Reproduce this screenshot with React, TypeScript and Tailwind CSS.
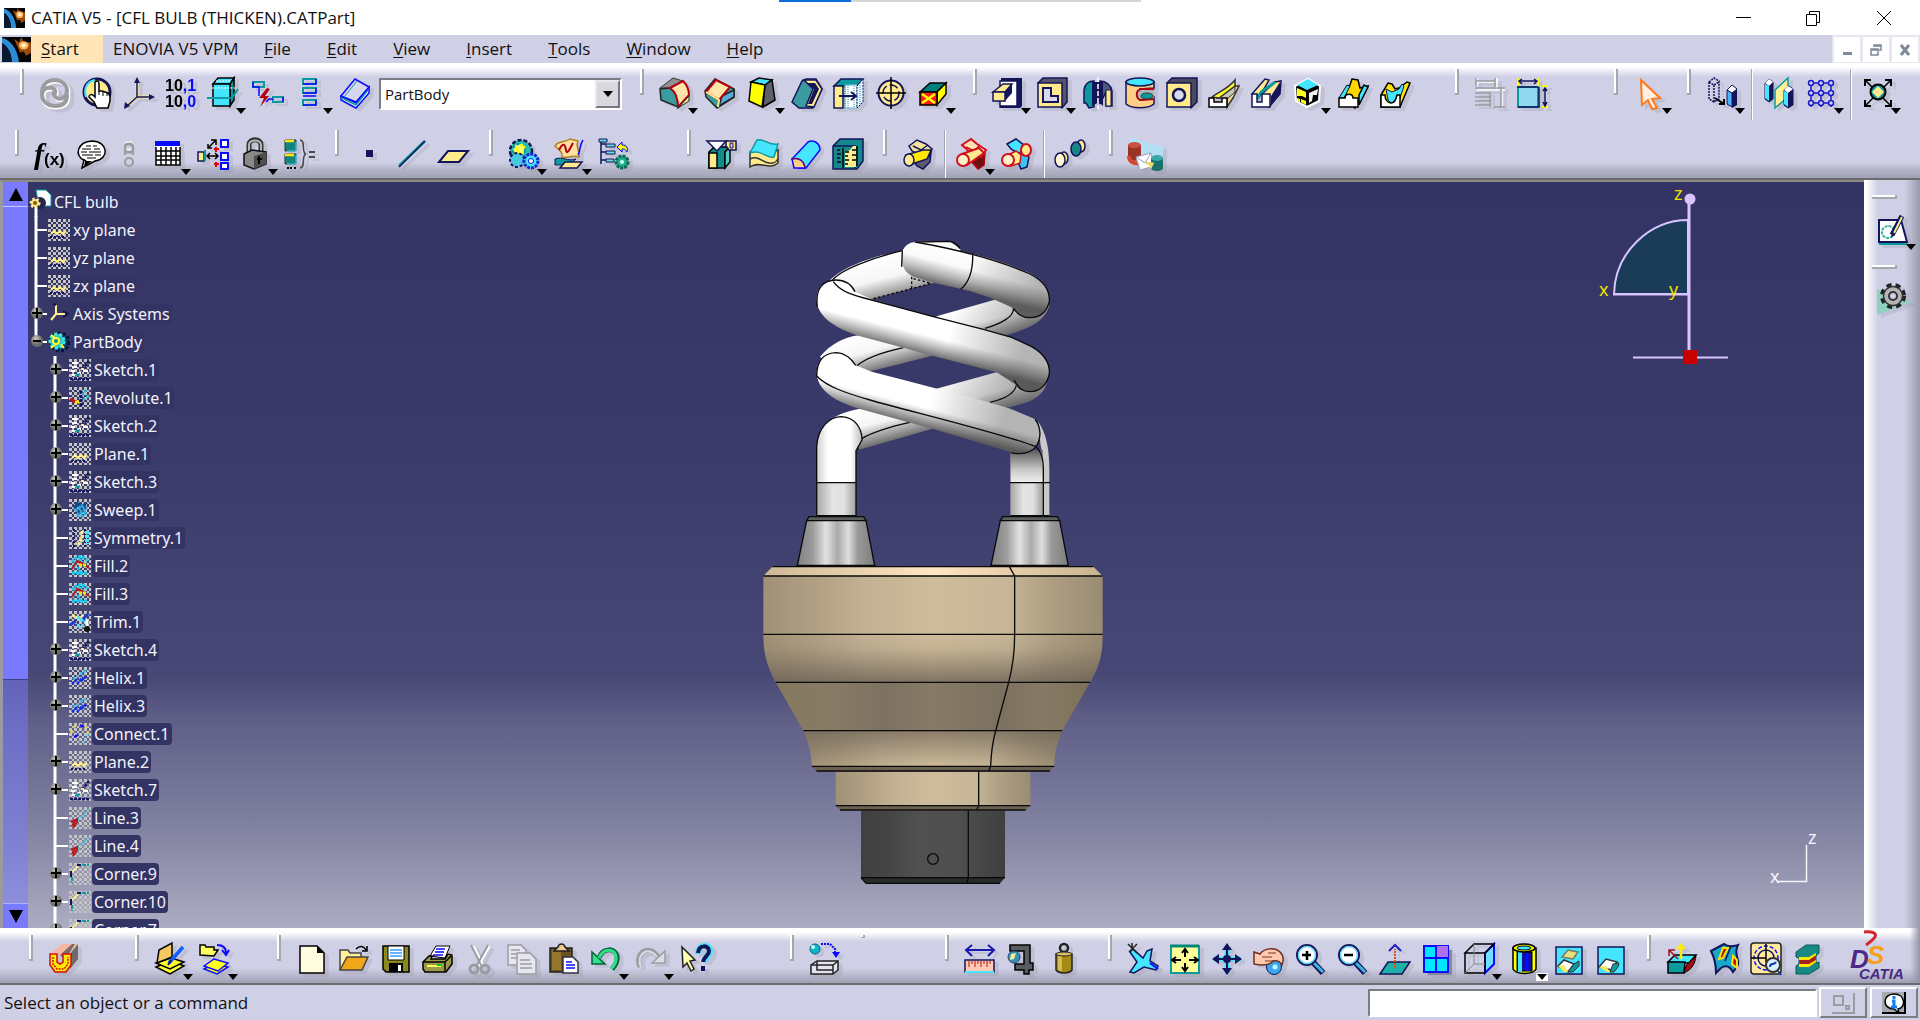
import type { ReactNode } from 'react';

const NAVY = '#14145a';
const TEAL = '#0b9a9e';
const CYAN = '#45e5ff';
const CREAM = '#ffeb8c';
const RED = '#b3000f';
const BLUE = '#0a0aff';
const GREY = '#9c9ca0';

// Every toolbar glyph is drawn on a 32 x 32 grid
const icons: Record<string, ReactNode> = {
  update: (
    <>
      <g fill="none" stroke="#fff" strokeWidth="5">
        <path d="M4 17C4 8 10 4 17 4s12 5 12 11-6 9-10 7-4-6-1-7" />
        <path d="M29 19c0 9-6 11-13 11S4 26 4 19s6-8 10-7 4 6 1 7" />
      </g>
      <g fill="none" stroke={GREY} strokeWidth="4">
        <path d="M3 16C3 7 9 3 16 3s12 5 12 11-6 9-10 7-4-6-1-7" />
        <path d="M28 18c0 9-6 11-12 11S3 25 3 18s6-8 10-7 4 6 1 7" />
      </g>
    </>
  ),
  hand: (
    <>
      <circle cx="16" cy="15" r="13" fill={CREAM} stroke={NAVY} strokeWidth="3" />
      <path d="M5 20C2 9 8 4 14 3" fill="none" stroke={CYAN} strokeWidth="2" />
      <path d="M14 5c2-2 4-1 4 2v7l3 0 3 1 3 1 2 3v5l-2 7H16l-3-6-5-5c0-3 3-3 5-1l1 1z" fill="#fff" stroke="#000" strokeWidth="1.5" />
      <path d="M18 14v4M22 15v4M26 16v3" stroke="#000" />
    </>
  ),
  axis: (
    <>
      <path d="M14 3v17h15M14 20L4 29" fill="none" stroke={CREAM} strokeWidth="3" />
      <path d="M14 3v17h15M14 20L4 29" fill="none" stroke={NAVY} strokeWidth="1.5" />
      <path d="M14 0l3 6h-6zM32 20l-6-3v6zM1 32l1-7 5 4z" fill={NAVY} />
    </>
  ),
  digits: (
    <g fontFamily="Liberation Sans, sans-serif" fontWeight="bold" fontSize="16">
      <text x="0" y="14">10<tspan fill={BLUE}>,1</tspan></text>
      <text x="0" y="30">10<tspan fill={BLUE}>,0</tspan></text>
    </g>
  ),
  block: (
    <>
      <path d="M6 7l5-6h16l-4 6z" fill={CYAN} stroke="#000" strokeWidth="1.5" />
      <path d="M23 7l4-6v22l-4 6z" fill={TEAL} stroke="#000" strokeWidth="1.5" />
      <path d="M6 7h17v22H6z" fill={CYAN} stroke="#000" strokeWidth="1.5" />
      <path d="M0 21h25l6-9" fill="none" stroke={TEAL} strokeWidth="2" />
      <path d="M5 11h24M9 4h15" stroke="#fff" strokeDasharray="2 1" />
    </>
  ),
  bolt: (
    <>
      <path d="M1 5h11v5H1zM21 20h10v5H21z" fill="none" stroke={TEAL} strokeWidth="2" />
      <path d="M1 5v5h6v9M21 22h-4l-3 3M31 20v5" fill="none" stroke={BLUE} strokeWidth="1.5" />
      <path d="M15 11L7 21h5l-4 9 9-11h-4l5-7z" fill={RED} />
    </>
  ),
  stack: (
    <>
      <path d="M9 2h13v5H9zM9 11h13v5H9zM9 23h13v5H9z" fill="none" stroke={TEAL} strokeWidth="2" />
      <path d="M9 7h13V2M9 19h13M9 16h13v-5M9 28h13v-5" fill="none" stroke={BLUE} strokeWidth="1.5" />
    </>
  ),
  book: (
    <>
      <path d="M2 19v4l15 8 13-15v-6L17 26z" fill="#fff" stroke={BLUE} strokeWidth="1.5" />
      <path d="M3 21l14 7 12-15" fill="none" stroke={TEAL} strokeWidth="1.5" />
      <path d="M2 19L16 2l14 8-13 15z" fill="#d6d6ee" stroke={BLUE} strokeWidth="1.5" />
      <path d="M5 20L18 4" stroke={TEAL} />
    </>
  ),
  fillet: (
    <>
      <path d="M1 11L14 1l10 3-12 7z" fill="#8f8f8f" stroke="#333" />
      <path d="M1 12l10-1c5 3 8 10 8 19L2 23z" fill="#3a9ba0" stroke="#222" strokeWidth="1.5" />
      <path d="M11 11L24 4c5 5 6 9 6 14l-11 12c0-8-2-15-8-19z" fill="#ffe6a8" stroke={RED} strokeWidth="2" />
      <path d="M19 31l11-12v5z" fill={CREAM} stroke="#222" />
    </>
  ),
  chamfer: (
    <>
      <path d="M1 14l10-12 19 10v8L13 31 2 20z" fill="#3a9ba0" stroke="#222" strokeWidth="1.5" />
      <path d="M15 29l3-10 12-6v7z" fill="#5aa9d8" stroke="#222" strokeWidth="1.5" />
      <path d="M2 15L12 3l14 7-11 13z" fill="#ffe6a8" stroke={RED} strokeWidth="2" />
      <path d="M2 15l13 8-1 7" fill="none" stroke={CREAM} strokeWidth="2" />
    </>
  ),
  draft: (
    <>
      <path d="M5 5l8-4 13 2-7 5z" fill={CYAN} stroke="#000" strokeWidth="1.5" />
      <path d="M19 8l7-5 3 20-12 7z" fill="#5f6068" stroke="#000" strokeWidth="1.5" />
      <path d="M5 5l14 3-3 22-13-6z" fill="#ffff00" stroke="#000" strokeWidth="1.5" />
    </>
  ),
  shell: (
    <>
      <path d="M1 25L11 4l4-2h10l6 10-9 19H8z" fill="#3a9ba0" stroke={NAVY} strokeWidth="1.5" />
      <path d="M13 3h12l6 9-8 18-8-1 7-17z" fill={CREAM} stroke={NAVY} strokeWidth="1.5" />
      <path d="M16 6h8l4 6-7 15h-4l6-15z" fill={NAVY} />
    </>
  ),
  thickness: (
    <>
      <path d="M1 9l7-7h22l-6 7z" fill={TEAL} stroke={NAVY} strokeWidth="1.5" />
      <path d="M1 9h9v22H1z" fill={CREAM} stroke={NAVY} strokeWidth="1.5" />
      <path d="M12 8h12v23H12z" fill="#fff" stroke="#7bd" />
      <path d="M24 9l6-7v23l-6 6z" fill="#e8f6ff" stroke={NAVY} strokeDasharray="2 1" />
      <path d="M12 8v23M15 8v23M27 6v22M21 9v22" stroke={TEAL} strokeDasharray="1 1" />
      <path d="M6 19h16M18 15l5 4-5 4" fill="none" stroke={NAVY} strokeWidth="2" />
    </>
  ),
  target: (
    <>
      <circle cx="16" cy="16" r="12.5" fill={CREAM} stroke={NAVY} strokeWidth="2" />
      <circle cx="16" cy="16" r="8" fill="none" stroke={NAVY} strokeWidth="1.5" strokeDasharray="9 3" />
      <path d="M16 0v32M1 16h30" stroke="#000" strokeWidth="1.5" />
    </>
  ),
  removeFace: (
    <>
      <path d="M3 15L13 6h16l-9 9z" fill="#00807c" stroke="#000" strokeWidth="1.5" />
      <path d="M20 15l9-9v11l-9 11z" fill="#ffff00" stroke="#000" strokeWidth="1.5" />
      <path d="M3 15h17v13H3z" fill="#ff1a1a" stroke="#000" strokeWidth="1.5" />
      <path d="M5 17l13 9M18 17L5 26" stroke="#ffff00" strokeWidth="2.5" />
    </>
  ),
  pad: (
    <>
      <path d="M9 1h21v28l-2 2H7l2-3z" fill={NAVY} />
      <path d="M8 4h17v25H8z" fill="#fff" stroke={NAVY} strokeWidth="1.5" />
      <path d="M1 15l10-8h9l-7 8z" fill={CREAM} stroke={NAVY} strokeWidth="1.5" />
      <path d="M13 15l7-8v9l-7 8z" fill={NAVY} />
      <path d="M1 15h12v9H1z" fill={CREAM} stroke={NAVY} strokeWidth="1.5" />
    </>
  ),
  pocket: (
    <>
      <path d="M1 6l5-5h24v24l-5 6z" fill="#55556a" stroke={NAVY} strokeWidth="1.5" />
      <path d="M1 6h24v24H1z" fill={CREAM} stroke={NAVY} strokeWidth="1.5" />
      <path d="M6 11h8v8h7v6H6z" fill="#d8d8ee" stroke={NAVY} strokeWidth="2" />
    </>
  ),
  shaft: (
    <>
      <path d="M2 13C3 6 8 4 12 4v26l-5 1-3-5-2 0z" fill={TEAL} stroke={NAVY} strokeWidth="1.5" />
      <path d="M18 4c6 0 11 4 12 10v15h-6V15l-6 12z" fill="#4a5a78" stroke={NAVY} strokeWidth="1.5" />
      <path d="M10 5h11v24l-4-4-7 4z" fill={NAVY} />
      <path d="M24 13h5v16h-5z" fill={CREAM} stroke={NAVY} />
      <path d="M16 0v32" stroke="#fff" strokeWidth="1.5" strokeDasharray="5 2" />
    </>
  ),
  groove: (
    <>
      <path d="M2 5v22c6 5 22 5 28 0v-7l-14 3V12l14-1V5z" fill="#ffcf86" stroke={NAVY} strokeWidth="1.5" />
      <path d="M30 12H18c-7 0-7 11 0 11l12-1" fill="#a8b8b8" stroke={RED} strokeWidth="2" />
      <ellipse cx="23" cy="19" rx="6" ry="3" fill={TEAL} stroke="#333" />
      <ellipse cx="16" cy="5" rx="14" ry="4" fill={CYAN} stroke={NAVY} strokeWidth="1.5" />
    </>
  ),
  hole: (
    <>
      <path d="M1 6l5-5h25v24l-6 6z" fill="#4a4a5c" stroke={NAVY} strokeWidth="1.5" />
      <path d="M1 6h24v24H1z" fill={CREAM} stroke={NAVY} strokeWidth="1.5" />
      <circle cx="13" cy="18" r="6" fill="#d8d8ee" stroke={NAVY} strokeWidth="2.5" />
    </>
  ),
  rib: (
    <>
      <path d="M19 21L26 9l5 0-6 12-6 9z" fill="#f4d99a" stroke="#333" strokeWidth="1.5" />
      <path d="M8 21L27 7l0 8-8 7z" fill="#c8c8b8" stroke="#333" />
      <path d="M4 20C10 15 20 12 27 3l0 6-16 12z" fill="#ffff30" stroke="#333" strokeWidth="1.5" />
      <path d="M1 21h5v4h8v-4h5v9H1z" fill="#fff" stroke="#000" strokeWidth="1.5" />
    </>
  ),
  slot: (
    <>
      <path d="M2 17L15 2l4 1-9 16z" fill={CREAM} stroke={NAVY} strokeWidth="1.5" />
      <path d="M12 17L25 5l6-1-1 13-11 13z" fill={CREAM} stroke={NAVY} strokeWidth="1.5" />
      <path d="M8 22C9 13 18 12 25 5" fill="none" stroke={TEAL} strokeWidth="3" />
      <path d="M20 30l10-13V5l-9 14z" fill={NAVY} />
      <path d="M2 17h5v8h5v-8h8v13H2z" fill="#fff" stroke={NAVY} strokeWidth="1.5" />
    </>
  ),
  stiffener: (
    <>
      <path d="M3 9l13-7 12 7-1 15-12 6-11-6z" fill="#000" stroke="#fff" strokeWidth="2" />
      <path d="M5 8l11-6 10 6-11 5z" fill={CYAN} />
      <path d="M5 11l9 4v6l-4-2-5 0zM5 21l3 1 0 3-3-1z" fill="#ffff20" />
      <path d="M17 16l9-4-1 6-4 0-1 6-3 2z" fill="#f0f0f0" />
      <path d="M9 22l5 2v4l-5-3z" fill="#ffff20" />
    </>
  ),
  solidCombine: (
    <>
      <path d="M5 20L13 8l2-6 6 1 2 8 8-2-8 14-5 8z" fill="#ffd700" stroke="#000" strokeWidth="1.5" />
      <path d="M22 18l5-10 4 2-9 18z" fill={CYAN} stroke="#000" strokeWidth="1.5" />
      <path d="M2 21l8-13 3 1-6 12z" fill={CYAN} stroke="#000" />
      <path d="M2 21h6c0-5 8-5 8 0h5v9H2z" fill="#fff" stroke="#000" strokeWidth="1.5" />
    </>
  ),
  removedLoft: (
    <>
      <path d="M2 18L9 6l4 1 3 5 4-1 8-6 3 1-10 24H2z" fill="#ffe600" stroke="#000" strokeWidth="1.5" />
      <path d="M7 12l6 3 7-3 3-5 2 2-5 15-6 4-5-5z" fill={CYAN} stroke={NAVY} />
      <path d="M2 18h4c0 5 3 8 6 8s5-3 6-8h3v12H2z" fill="#fff" stroke="#000" strokeWidth="1.5" />
    </>
  ),
  dimsOff: (
    <>
      <g stroke="#fff" strokeWidth="1.5" fill="none" transform="translate(1 1)">
        <path d="M2 4h20M2 12h28M27 12v18M2 0v8M22 0v12" />
      </g>
      <path d="M2 4h19M2 1v8M21 1v9M1 11h30M1 16h16M1 20h16M1 24h16M1 28h16M16 16v14M27 10v21M20 30h11" stroke={GREY} strokeWidth="1.5" fill="none" />
    </>
  ),
  dims: (
    <>
      <path d="M2 1v8M22 1v8" stroke="#ffff00" strokeWidth="2" />
      <path d="M26 9h6M26 30h6" stroke="#ffff00" strokeWidth="2" />
      <path d="M3 4h18M6 2L3 4l3 3M18 2l3 2-3 3M29 11v17M27 14l2-3 2 3M27 25l2 4 2-4" fill="none" stroke={NAVY} strokeWidth="1.5" />
      <path d="M2 10h20v20H2z" fill="#8fd8ef" stroke={TEAL} strokeWidth="2" />
      <path d="M1 10h21M2 30h21V10" fill="none" stroke={NAVY} strokeWidth="1.5" />
    </>
  ),
  cursor: (
    <path d="M8 3l19 18-8 1 5 9-5 1-4-9-6 5z" fill="#fff0e0" stroke="#ff7a1a" strokeWidth="2" />
  ),
  transform: (
    <>
      <path d="M3 5l5-4 5 3v18l-5 3-5-3zM3 5l5 3 5-3M8 8v17" fill="none" stroke={NAVY} strokeWidth="1.5" strokeDasharray="2 1" />
      <path d="M9 21l9 6M18 22v5h-5" fill="none" stroke="#000" strokeWidth="2" />
      <path d="M21 13l5 3v14l-5-3z" fill="#4ab6ff" stroke={NAVY} />
      <path d="M26 16l5-4v16l-5 3z" fill={NAVY} />
      <path d="M21 13l5-5 5 4-5 4z" fill="#fff" stroke={NAVY} />
    </>
  ),
  mirror: (
    <>
      <path d="M2 6l4-4 4 3v17l-4 3-4-3z" fill={NAVY} stroke={NAVY} />
      <path d="M2 7l4 2v15l-4-3z" fill={CYAN} />
      <path d="M2 6l4-4 4 3-4 4z" fill="#fff" />
      <path d="M12 13L25 1v19L12 31z" fill="#fdf394" stroke={TEAL} strokeWidth="1.5" />
      <path d="M21 13l5-4 4 3v16l-5 3-4-3z" fill={NAVY} stroke={NAVY} />
      <path d="M21 14l4 2v14l-4-3z" fill={CYAN} />
      <path d="M21 13l4-4 5 3-5 4z" fill="#fff" />
    </>
  ),
  pattern: (
    <g fill="#cfcfe6" stroke="#1a1acc" strokeWidth="1.5">
      <path d="M6 3v27M16 3v27M26 3v27M3 6h26M3 16h26M3 26h26" />
      {[6, 16, 26].map((x) =>
        [6, 16, 26].map((y) => <circle key={`${x}-${y}`} cx={x} cy={y} r="2.5" />)
      )}
    </g>
  ),
  scaling: (
    <>
      <path d="M4 4l24 24M28 4L4 28" stroke="#000" strokeWidth="1.5" />
      <path d="M3 9V3h6M23 3h6v6M3 23v6h6M23 29h6v-6" fill="none" stroke="#000" strokeWidth="2" />
      <circle cx="16" cy="15" r="7.5" fill={TEAL} stroke="#000" strokeWidth="2" />
      <path d="M16 9l6 6-6 6-6-6z" fill={CREAM} />
    </>
  ),
  formula: (
    <>
      <text x="0" y="26" fontFamily="Liberation Serif, serif" fontStyle="italic" fontWeight="bold" fontSize="30">f</text>
      <text x="10" y="27" fontFamily="Liberation Sans, sans-serif" fontWeight="bold" fontSize="17">(x)</text>
    </>
  ),
  comment: (
    <>
      <path d="M8 22C-2 18 1 4 16 3c16 0 18 18 3 20L6 30z" fill="#fff" stroke="#000" strokeWidth="1.5" />
      <path d="M6 22l3 1-1 6 8-6h-5l-3-2z" fill="#000" />
      <path d="M10 8h5m2 0h4M6 11h9m3 0h6M5 14h6m2 0h12M6 17h11m2 0h6M11 20h9" stroke="#000" strokeWidth="1.2" />
    </>
  ),
  link: (
    <>
      <path d="M10 17V9c0-5 8-5 8 0v8M10 13h8" fill="none" stroke="#fff" strokeWidth="4" />
      <path d="M10 17V9c0-4 8-4 8 0v8M10 14h8" fill="none" stroke={GREY} strokeWidth="3" />
      <circle cx="14" cy="24" r="4" fill="#cfcfe6" stroke={GREY} strokeWidth="2" />
    </>
  ),
  table: (
    <>
      <path d="M4 4h24v23H4z" fill="#fff" />
      <path d="M4 9v18h24V9M9 9v18M14 9v18M19 9v18M24 9v18M4 13h24M4 18h24M4 22h24" fill="none" stroke="#000" strokeWidth="1.5" />
      <path d="M3 3h25v5H3z" fill={BLUE} />
    </>
  ),
  relations: (
    <>
      <path d="M1 14h6v9H1z" fill={CREAM} stroke={NAVY} strokeWidth="1.5" />
      <path d="M8 12v11" stroke={TEAL} strokeWidth="2" />
      <path d="M11 10l8-8M14 2h5v5M11 6v4h4M10 18h11M13 15l-3 3 3 3M18 15l3 3-3 3" fill="none" stroke="#000" strokeWidth="1.5" />
      <path d="M19 9v5M17 11h5M19 24v5M17 26h5" stroke="#e00000" strokeWidth="2" />
      <path d="M24 2h7v7h-7zM24 15h7v7h-7zM24 25h7v6h-7z" fill="#fff" stroke={BLUE} strokeWidth="2" />
    </>
  ),
  lock: (
    <>
      <path d="M10 15V7c0-7 12-7 12 0v9" fill="none" stroke="#333" strokeWidth="5" />
      <path d="M10 15V7c0-6 12-6 12 0v9" fill="none" stroke="#b8b8b8" strokeWidth="2" />
      <path d="M5 16l8-4 14 2v12l-12 5L5 27z" fill="#8a8a8a" stroke="#111" strokeWidth="1.5" />
      <path d="M15 18l12-4v12l-12 5z" fill="#4e4e4e" />
      <path d="M20 18v8M18 21h5" stroke="#000" strokeWidth="2" />
    </>
  ),
  equivalent: (
    <>
      <path d="M1 2h11v11H1zM1 16h11v10H1z" fill="#12857f" stroke="#333" />
      <path d="M1 3h9M1 17h9" stroke="#ffe600" strokeWidth="2.5" />
      <path d="M12 4v9H3M12 17v9H3" fill="none" stroke={CYAN} />
      <path d="M3 30h2M6 30h2M10 30h2" stroke="#000" strokeWidth="2" />
      <path d="M16 2c6 0 1 13 6 14-5 1 0 14-6 14" fill="none" stroke="#444" strokeWidth="1.5" />
      <path d="M25 14h6M25 19h6" stroke="#222" strokeWidth="1.5" />
    </>
  ),
  point: <path d="M12 12h7v7h-7z" fill={NAVY} />,
  line: (
    <>
      <path d="M3 28L29 3" stroke={TEAL} strokeWidth="3" />
      <path d="M3 29L29 3" stroke={NAVY} strokeWidth="1.5" />
    </>
  ),
  plane: <path d="M1 24l9-11h20l-9 11z" fill={CREAM} stroke={NAVY} strokeWidth="2" />,
  gears: (
    <>
      <circle cx="13" cy="13" r="11" fill="#29bfb0" stroke={NAVY} strokeWidth="2.5" strokeDasharray="4 2" />
      <circle cx="11" cy="12" r="6" fill="#ffff60" stroke={TEAL} strokeWidth="2" strokeDasharray="3 2" />
      <circle cx="9" cy="22" r="7" fill="#46c8e0" stroke={NAVY} strokeWidth="2" strokeDasharray="3 2" />
      <circle cx="23" cy="23" r="7" fill={CYAN} stroke="#1428c8" strokeWidth="3" strokeDasharray="3 1" />
      <circle cx="23" cy="23" r="2.5" fill="#fff" stroke={BLUE} />
      <path d="M13 6l4 4M8 9l3 6" stroke="#ffff00" strokeWidth="2" />
    </>
  ),
  shapeSet: (
    <>
      <path d="M2 8C6 2 12 5 17 1l8 2c-3 6 2 9 1 16-7-3-10 2-17 0 1-5-3-7-7-11z" fill="#ffe0a0" stroke="#b08020" strokeWidth="1.5" />
      <path d="M6 12c4-8 6-6 7 0s4-2 7-7" fill="none" stroke={RED} strokeWidth="2" />
      <path d="M2 21c8-3 12 3 21 0l-8 8c-4-3-8-2-13-2z" fill={TEAL} stroke={NAVY} />
      <path d="M7 30l5-6h17l-5 6z" fill={CREAM} stroke={NAVY} strokeWidth="1.5" />
      <path d="M30 2c-4 6-2 9-5 15" fill="none" stroke={BLUE} strokeWidth="1.5" />
    </>
  ),
  publish: (
    <>
      <path d="M3 2v24M3 6h5M3 14h5M3 22h5" stroke={NAVY} strokeWidth="1.5" />
      <path d="M1 1h8v3H1zM8 6h9v3H8zM8 13h9v3H8zM8 21h8v3H8z" fill="#6dd" stroke={NAVY} />
      <path d="M19 9l5-5v3c5 0 6 3 5 7-2-3-3-3-5-3v3z" fill="#ffff00" stroke={BLUE} />
      <circle cx="24" cy="24" r="6" fill="#21b08c" stroke="#0a6a50" strokeWidth="3" strokeDasharray="3 1" />
      <circle cx="24" cy="24" r="2" fill="#cfe" />
    </>
  ),
  split: (
    <>
      <path d="M3 14l5-5h15l-4 5v16H3z" fill="#0f8d8b" stroke="#000" strokeWidth="1.5" />
      <path d="M19 14l5-5v15l-5 6z" fill="#5cc" stroke="#000" strokeWidth="1.5" />
      <path d="M3 15h8v15H3z" fill={CREAM} stroke="#000" strokeWidth="1.5" />
      <path d="M1 3h19l-9 10z" fill="#fff" stroke={NAVY} strokeWidth="1.5" />
      <path d="M20 3h10v9h-7l-3-4z" fill={CREAM} stroke={NAVY} strokeWidth="1.5" />
      <path d="M24 5h3v5h-3z" fill="#cfcfe6" stroke={NAVY} />
    </>
  ),
  thickSurface: (
    <>
      <path d="M2 14c8-5 16 5 28-2v13c-9 8-18-3-28 4z" fill={CREAM} stroke="#333" strokeWidth="1.5" />
      <path d="M2 15L9 2c7-2 12 6 21 4l-4 13c-8 2-12-8-24-4z" fill={CYAN} stroke={TEAL} strokeWidth="1.5" />
      <path d="M2 21c8-4 12 3 19 4s7-2 9-4" fill="none" stroke="#333" strokeWidth="1.5" />
    </>
  ),
  closeSurface: (
    <>
      <path d="M2 21L18 4c5-3 12 1 12 8L16 30H9z" fill={CYAN} stroke={BLUE} strokeWidth="1.5" />
      <path d="M2 21c7-2 12 2 13 9H4z" fill="#ffd080" stroke={BLUE} strokeWidth="1.5" />
      <path d="M2 21c7-2 12 2 13 8" fill="none" stroke={RED} />
    </>
  ),
  sew: (
    <>
      <path d="M1 8l7-7h23v22l-6 8H1z" fill="#13898c" stroke={NAVY} strokeWidth="1.5" />
      <path d="M1 8h22v22" fill="none" stroke={NAVY} strokeWidth="1.5" />
      <path d="M13 14l5-2 3-4h3v21H13z" fill={CREAM} />
      <path d="M25 8v20M5 12h3M5 16h4M5 20h3M5 24h4M11 10v20M13 14h4M13 18h3M13 22h4M13 26h3M20 12h4M20 17h4M20 22h4" stroke="#000" strokeWidth="1.5" />
    </>
  ),
  assemble: (
    <>
      <path d="M12 24l8-9 9-1-1 10-7 7-6-3z" fill="#5a5a70" stroke={NAVY} strokeWidth="1.5" />
      <path d="M7 8l8-6 9 4 6 5-3 8-9-2-8-4z" fill="#f2e2a0" stroke={NAVY} strokeWidth="1.5" />
      <path d="M11 8l8 4 7-5" fill="none" stroke={NAVY} strokeWidth="1.5" />
      <path d="M4 17l17-5 8 0-4 9-15 5z" fill="#ffe800" stroke={NAVY} strokeWidth="1.5" />
      <ellipse cx="7" cy="22" rx="5" ry="6" fill={CREAM} stroke={NAVY} strokeWidth="1.5" />
    </>
  ),
  boolAdd: (
    <>
      <path d="M14 22l8-10 7 3-1 12-6 4z" fill="#701010" stroke={RED} strokeWidth="1.5" />
      <path d="M6 7l9-6 6 5 9 6-5 7-10-4z" fill="#ffe2b0" stroke="#d01020" strokeWidth="2" />
      <path d="M10 9l8 4 6-6" fill="none" stroke="#d01020" strokeWidth="1.5" />
      <path d="M6 16l17-6 5 5-17 12z" fill={CREAM} stroke="#d01020" strokeWidth="2" />
      <circle cx="7" cy="22" r="6" fill="#fff0c8" stroke="#d01020" strokeWidth="2" />
    </>
  ),
  boolTrim: (
    <>
      <path d="M6 6l9-5 9 7-6 8-8-5z" fill={CYAN} stroke={NAVY} strokeWidth="1.5" />
      <path d="M15 19l8-4 5 4-2 10-6 2z" fill="#3ac4f0" stroke={NAVY} strokeWidth="1.5" />
      <path d="M7 17l8-4 5 4-1 8-9 3z" fill={CREAM} stroke="#d01020" strokeWidth="1.5" />
      <circle cx="7" cy="22" r="6" fill="#fff0c8" stroke="#d01020" strokeWidth="2" />
      <ellipse cx="25" cy="12" rx="5" ry="6" fill={CREAM} stroke="#d01020" strokeWidth="2" />
    </>
  ),
  lump: (
    <>
      <ellipse cx="26" cy="8" rx="4" ry="6" fill={CREAM} stroke={NAVY} strokeWidth="1.5" />
      <ellipse cx="21" cy="11" rx="5" ry="7" fill="#15878a" stroke={NAVY} strokeWidth="1.5" />
      <ellipse cx="9" cy="20" rx="4" ry="6" fill={CREAM} stroke={NAVY} strokeWidth="1.5" />
      <ellipse cx="5" cy="22" rx="5" ry="7" fill="#fff6d0" stroke={NAVY} strokeWidth="1.5" />
    </>
  ),
  catalog: (
    <>
      <path d="M1 0c11 0 17 7 34 8v12H9L1 14z" fill="#b4e0f6" />
      <path d="M0 7v12c0 5 13 5 13 0V7z" fill="#9c3328" />
      <ellipse cx="6.5" cy="7" rx="6.5" ry="3" fill="#c8523f" />
      <path d="M1 18c0 7 6 8 13 7" fill="none" stroke="#d8442c" strokeWidth="4" />
      <path d="M8 19l15-4 3 13-14 4z" fill="#fff" stroke="#9aa0c0" />
      <path d="M8 19l9 6 6-10" fill="none" stroke="#9aa0c0" />
      <path d="M23 20h12v10c0 4-12 4-12 0z" fill="#18706f" />
      <ellipse cx="29" cy="20" rx="6" ry="3" fill="#3aa8a4" />
      <path d="M18 25l6 1-2 4" fill="none" stroke="#e8dc70" strokeWidth="3" />
    </>
  ),
  sectionMaterial: (
    <>
      <path d="M2 11L14 1h16L19 12z" fill="#f6b8a4" />
      <path d="M12 12L24 1l3 0-10 16z" fill="#7c6a66" />
      <path d="M22 11l8-10v15l-8 10z" fill="#6d6a68" />
      <path d="M2 11h7v8l3 2 3-2v-8h8v11l-5 7H7l-5-7z" fill="#ffe800" stroke="#d01010" strokeWidth="1.5" />
      <path d="M5 14v7l4 5h7l4-5v-7" fill="none" stroke="#d01010" strokeWidth="1.5" strokeDasharray="2 1" />
    </>
  ),
  catalogOpen: (
    <>
      <path d="M2 24l15-6 13 5-14 8z" fill="#ffff30" stroke="#000" strokeWidth="1.5" />
      <path d="M2 20l15-5 13 4-14 7z" fill="#ffff30" stroke="#000" strokeWidth="1.5" />
      <path d="M3 20L5 7l13-7v14z" fill="#f5c860" stroke="#000" strokeWidth="1.5" />
      <path d="M29 4L15 20" stroke="#1060ff" strokeWidth="3.5" />
      <path d="M17 17l-3 5" stroke={NAVY} strokeWidth="2" />
    </>
  ),
  catalogLoad: (
    <>
      <path d="M1 12V2h5l1 2h8v3h4l-4 6z" fill="#ffff60" stroke="#000" strokeWidth="1.5" />
      <path d="M18 2c7 0 9 3 9 8M23 7l4 5 3-5" fill="none" stroke={BLUE} strokeWidth="2" />
      <path d="M5 26l10-5 14 3-11 7z" fill="#ffff20" stroke={BLUE} strokeWidth="1.5" />
      <path d="M5 23l10-7 14 4-10 8z" fill="#ffff20" stroke={BLUE} strokeWidth="1.5" />
    </>
  ),
  newFile: (
    <>
      <path d="M4 3h17l7 7v20H4z" fill="#fffce0" stroke="#000" strokeWidth="1.5" />
      <path d="M21 3v7h7z" fill="#000" />
    </>
  ),
  openFile: (
    <>
      <path d="M2 27V7h8l2 3h11v5" fill="#fff0a0" stroke="#444" strokeWidth="1.5" />
      <path d="M2 27l7-13h21l-6 13z" fill="#f0a818" stroke="#444" strokeWidth="1.5" />
      <path d="M18 6c4-4 8-3 10 1M29 3v5h-5" fill="none" stroke="#000" strokeWidth="1.5" />
    </>
  ),
  save: (
    <>
      <path d="M3 3h26v26H6l-3-3z" fill="#8c8820" stroke="#000" strokeWidth="1.5" />
      <path d="M8 3h16v14H8z" fill="#fff" stroke="#000" />
      <path d="M10 7h12M10 10h12M10 13h12" stroke="#39f" strokeWidth="1.5" />
      <path d="M9 20h14v9H9z" fill="#000" />
      <path d="M18 22h3v6h-3z" fill="#fff" />
    </>
  ),
  print: (
    <>
      <path d="M8 13L14 3h14l-5 12z" fill="#fff" stroke="#000" />
      <path d="M14 6h9M13 9h9M11 12h10" stroke={BLUE} strokeWidth="1.5" />
      <path d="M1 19l6-6h3l-1 3h14l3-5 4 1v9l-6 8H3l-2-3z" fill="#9c9a4a" stroke="#000" strokeWidth="1.5" />
      <path d="M1 19h22l6-6M23 19v9" fill="none" stroke="#000" strokeWidth="1.5" />
      <path d="M5 23h14" stroke="#ffff60" strokeWidth="2" />
      <path d="M15 22h4" stroke="#0c0" strokeWidth="2" />
    </>
  ),
  cut: (
    <>
      <g fill="none" stroke="#fff" strokeWidth="3" transform="translate(1 1)">
        <path d="M8 2l10 20M24 2L13 22" />
      </g>
      <path d="M7 2l10 20M24 2L13 22" stroke={GREY} strokeWidth="2" />
      <circle cx="10" cy="26" r="4" fill="none" stroke={GREY} strokeWidth="3" />
      <circle cx="21" cy="26" r="4" fill="none" stroke={GREY} strokeWidth="3" />
    </>
  ),
  copy: (
    <g fill="#e6e6f0" stroke={GREY} strokeWidth="1.5">
      <path d="M2 2h13l5 5v15H2z" />
      <path d="M5 7h9M5 11h9M5 15h6" />
      <path d="M11 10h13l6 6v15H11z" />
      <path d="M14 17h10M14 21h12M14 25h12" />
    </g>
  ),
  paste: (
    <>
      <path d="M2 5h22v24H2z" fill="#6b5320" stroke="#222" strokeWidth="1.5" />
      <path d="M4 7h9v20H4z" fill="#94762e" />
      <path d="M6 8l4-4c1-4 6-4 7 0l4 4z" fill="#f0c890" stroke="#222" strokeWidth="1.5" />
      <path d="M15 14h10l5 5v11H15z" fill="#fff" stroke="#334" strokeWidth="1.5" />
      <path d="M18 19h6M18 22h9M18 25h9" stroke={BLUE} strokeWidth="1.5" />
    </>
  ),
  undo: (
    <>
      <path d="M9 15c4-11 16-10 18-2 1 5-1 9-5 13" fill="none" stroke="#08603a" strokeWidth="5" />
      <path d="M2 9v12h13z" fill="#2fe08a" stroke="#08603a" strokeWidth="1.5" />
      <path d="M9 15c4-10 15-10 17-2 1 5-1 9-5 13" fill="none" stroke="#2fe08a" strokeWidth="3" />
    </>
  ),
  redo: (
    <>
      <path d="M5 24C-1 10 14 0 23 14" fill="none" stroke={GREY} strokeWidth="5" />
      <path d="M6 24C0 11 14 2 22 14" fill="none" stroke="#dcdce8" strokeWidth="2" />
      <path d="M30 8v12H17z" fill="#dcdce8" stroke={GREY} strokeWidth="1.5" />
    </>
  ),
  whatsThis: (
    <>
      <path d="M2 4l13 13-5 1 4 8-3 2-4-8-4 4z" fill="#ffffb0" stroke="#222" strokeWidth="1.5" />
      <path d="M18 11c0-11 12-10 12-3 0 5-5 5-6 11" fill="none" stroke={CYAN} strokeWidth="6" />
      <path d="M18 10c1-9 11-8 11-2 0 5-5 5-6 11M23 23v5" fill="none" stroke={NAVY} strokeWidth="4" />
    </>
  ),
  paintMaterial: (
    <>
      <circle cx="6" cy="6" r="5" fill="#10b4cc" stroke="#067" />
      <circle cx="4" cy="4" r="2" fill="#c8ffff" />
      <path d="M12 1h9l5 5v6" fill="none" stroke={BLUE} strokeWidth="2" strokeDasharray="2 1" />
      <path d="M23 9h8l-4 6z" fill={BLUE} />
      <path d="M2 22l6-4h21v9l-5 4H2z" fill="#e4e4f0" stroke="#222" strokeWidth="1.5" />
      <path d="M2 22h22l5-4M24 22v9M8 18v9h16" fill="none" stroke="#222" strokeWidth="1.5" />
    </>
  ),
  measure: (
    <>
      <path d="M3 7h26M8 2L2 7l6 6M24 2l6 5-6 6" fill="none" stroke="#1a1ab0" strokeWidth="2" />
      <path d="M1 17h29v12H1z" fill="#ffc9b4" stroke={NAVY} strokeWidth="1.5" />
      <path d="M1 29h29" stroke={CYAN} strokeWidth="2" />
      <path d="M5 18v6M8 18v3M11 18v6M14 18v3M17 18v6M20 18v3M23 18v6M26 18v3" stroke="#b01010" />
    </>
  ),
  measureItem: (
    <>
      <path d="M4 2h20v18h3v7h-4v4h-5v-4h-9v-6h9V8H4z" fill="#5a5c64" stroke="#000" strokeWidth="1.5" />
      <circle cx="8" cy="14" r="6" fill="#3c8fb4" stroke="#246" />
      <path d="M5 11l5-1-2 6-4 1z" fill="#f4f090" />
    </>
  ),
  mass: (
    <>
      <circle cx="16" cy="5" r="4" fill="none" stroke="#222" strokeWidth="2.5" />
      <path d="M8 11h16v16c-3 4-13 4-16 0z" fill="#a58a18" stroke="#222" strokeWidth="1.5" />
      <path d="M10 13h4v15l-4-1z" fill="#d8bc4c" />
      <ellipse cx="16" cy="11" rx="8" ry="2" fill="#d8c060" stroke="#222" />
    </>
  ),
  fly: (
    <>
      <path d="M6 6l10 9 4-7 5-2-2 12 8 5-2 4-12-3-10 6-4-1 7-10L3 9z" fill={CYAN} stroke={NAVY} strokeWidth="1.5" />
      <path d="M1 1l9 9M10 1L2 9M5 0v5" stroke="#222" strokeWidth="1.5" />
      <path d="M23 20l8 6" stroke={BLUE} strokeWidth="2" />
    </>
  ),
  fitAll: (
    <>
      <path d="M2 3h28v27H2z" fill="#ffff98" stroke={TEAL} strokeWidth="2" />
      <path d="M1 3h29" stroke="#087" strokeWidth="3" />
      <path d="M16 7v7M16 20v8M4 17h8M20 17h8M13 10l3-4 3 4M13 24l3 4 3-4M7 14l-4 3 4 3M25 14l4 3-4 3" fill="none" stroke="#000" strokeWidth="2" />
    </>
  ),
  pan: (
    <>
      <path d="M16 3v27M3 16h27" stroke={CYAN} strokeWidth="5" />
      <path d="M16 3v27M3 16h27" stroke={NAVY} strokeWidth="2" />
      <path d="M16 0l5 7H11zM16 32l5-7H11zM1 16l7-5v10zM31 16l-7-5v10z" fill={NAVY} />
      <circle cx="16" cy="16" r="4" fill={NAVY} />
    </>
  ),
  rotate: (
    <>
      <circle cx="21" cy="24" r="7.5" fill="#3aa8f0" stroke={NAVY} />
      <circle cx="22" cy="24" r="2.5" fill="#c8f4ff" />
      <path d="M1 9l6 2c4-6 15-7 20-2 4 4 4 8 2 13-2-4-5-5-9-4-3 4-9 5-19 3z" fill="#ffc9b0" stroke="#703020" strokeWidth="1.5" />
      <path d="M9 14h10M12 18h9M15 10h8" stroke="#803020" />
    </>
  ),
  zoomIn: (
    <>
      <path d="M17 18l11 12" stroke={NAVY} strokeWidth="6" />
      <path d="M17 18l11 11" stroke="#3ab8e0" strokeWidth="3" />
      <circle cx="12" cy="12" r="10" fill="#fff" stroke={NAVY} strokeWidth="2" />
      <circle cx="12" cy="12" r="8.5" fill="#fff" stroke="#5cd4f4" strokeWidth="1.5" />
      <path d="M7 12h9M12 8v9" stroke="#000" strokeWidth="2.5" />
    </>
  ),
  zoomOut: (
    <>
      <path d="M17 18l11 12" stroke={NAVY} strokeWidth="6" />
      <path d="M17 18l11 11" stroke="#3ab8e0" strokeWidth="3" />
      <circle cx="12" cy="12" r="10" fill="#fff" stroke={NAVY} strokeWidth="2" />
      <circle cx="12" cy="12" r="8.5" fill="#fff" stroke="#5cd4f4" strokeWidth="1.5" />
      <path d="M7 12h9" stroke="#000" strokeWidth="2.5" />
    </>
  ),
  normalView: (
    <>
      <path d="M1 31l8-12h22l-8 12z" fill="#1fb0a8" stroke={NAVY} strokeWidth="1.5" />
      <path d="M16 25V6" stroke="#e05010" strokeWidth="2" strokeDasharray="2 1" />
      <path d="M10 8l6-6 6 6" fill="none" stroke="#2020c0" strokeWidth="2" />
    </>
  ),
  multiView: (
    <>
      <path d="M7 7h24v25H7z" fill="#88889c" />
      <path d="M3 3h24v26H3z" fill="#00e8ff" stroke={BLUE} strokeWidth="2" />
      <path d="M16 3h11v12H16z" fill="#b070f0" />
      <path d="M15 3v26M3 15h24" stroke={BLUE} strokeWidth="2" />
    </>
  ),
  isoView: (
    <>
      <path d="M22 10l9-9v20l-9 9z" fill="#6fe0ff" stroke={BLUE} strokeWidth="2" />
      <path d="M2 10l9-9h20l-9 9zM2 10h20v20H2z" fill="none" stroke="#000" strokeWidth="1.5" />
      <path d="M11 1v20M11 21h11M2 30l9-9" fill="none" stroke="#888" />
    </>
  ),
  shading: (
    <>
      <path d="M5 5v21c3 6 20 6 23 0V5z" fill="#ffff00" stroke="#000" strokeWidth="1.5" />
      <path d="M9 9h15v19H9z" fill="#1010a0" stroke="#000" />
      <path d="M10 9h4v20h-4z" fill={CYAN} />
      <path d="M19 10v18" stroke={BLUE} strokeWidth="3" />
      <ellipse cx="16" cy="5" rx="11" ry="4" fill="#ffff00" stroke="#000" strokeWidth="1.5" />
      <ellipse cx="16" cy="5" rx="7" ry="2" fill={CYAN} stroke="#000" />
    </>
  ),
  hideShow: (
    <>
      <path d="M3 4h26v27H3z" fill={CYAN} stroke={NAVY} strokeWidth="1.5" />
      <path d="M9 14l6-7 10 2-5 7z" fill="#e8e080" stroke="#776" strokeWidth="1.5" />
      <path d="M5 23l6-6 10 4-6 8z" fill="#fff" stroke="#333" strokeWidth="1.5" />
      <path d="M15 29l6-8 5-3v5l-6 6z" fill={TEAL} stroke="#333" />
      <path d="M5 23l6 6h4l-4-7z" fill="#f8e860" />
    </>
  ),
  swapSpace: (
    <>
      <path d="M3 4h26v27H3z" fill={CYAN} stroke={NAVY} strokeWidth="1.5" />
      <path d="M4 24l7-8 11 3-5 8z" fill="#fff" stroke="#333" strokeWidth="1.5" />
      <path d="M15 29l3-8 6-1-1 4-4 5z" fill={TEAL} stroke="#333" />
      <path d="M4 24l8 5h3l-4-6z" fill="#f8e860" />
    </>
  ),
  draftAnalysis: (
    <>
      <path d="M2 19l7-7h21l-7 8z" fill={CYAN} stroke="#000" strokeWidth="1.5" />
      <path d="M2 19h17l-1 11H2z" fill={TEAL} stroke="#000" strokeWidth="1.5" />
      <path d="M18 30c2-12 6-9 12-18-1 10-4 14-12 18z" fill="#a00c14" stroke="#000" />
      <path d="M15 16V4" stroke="#ffee00" strokeWidth="2.5" />
      <path d="M15 0l5 6H10z" fill="#ffee00" />
      <path d="M12 16L4 8M3 13V7h6" fill="none" stroke="#a01010" strokeWidth="1.5" />
    </>
  ),
  curvature: (
    <>
      <path d="M3 8l13-7c5 4 10 2 14 1-5 9 2 14 0 20l-5 7c-3-6-7-7-12-4l-5 5c0-9-1-14-5-22z" fill="#18a8c8" stroke={NAVY} strokeWidth="2" />
      <path d="M11 16l4-11 5 0-5 10z" fill="#a01410" stroke="#ffe000" strokeWidth="2" />
      <path d="M24 21l1-8 4 4v8z" fill="#c01010" stroke="#ffe000" strokeWidth="2" />
      <path d="M17 18l6-15" stroke={NAVY} strokeWidth="1.5" />
    </>
  ),
  threadAnalysis: (
    <>
      <rect x="1" y="0" width="30" height="31" rx="3" fill="#ffe9a0" stroke="#222" strokeWidth="1.5" />
      <circle cx="16" cy="15" r="12" fill="none" stroke={BLUE} strokeWidth="1.5" strokeDasharray="4 2" />
      <circle cx="16" cy="15" r="8" fill="none" stroke={NAVY} strokeWidth="1.5" />
      <path d="M16 1v18M1 15h15" stroke="#000" strokeWidth="1.5" />
      <circle cx="23" cy="22" r="7" fill="#d8f0ff" stroke="#333" strokeWidth="2" />
      <path d="M20 24c0-5 4-1 6-5M28 28l3 4" fill="none" stroke="#13a" strokeWidth="2" />
    </>
  ),
  wallThickness: (
    <>
      <path d="M4 9l10-7h13v8l-3 3v7l3-1v6l-10 6H4v-8l3-2v-6l-3-1z" fill="#178a86" stroke="#0b5754" />
      <path d="M8 15h9l6-4v9l-6 4H8z" fill="#a3201a" />
      <path d="M7 14h10l7-4v2l-7 5H7zM7 21h10l7-4v2l-7 5H7z" fill="#ffe800" />
    </>
  ),
  sketcher: (
    <>
      <path d="M2 7h22l6 22H2z" fill="#fff" stroke={NAVY} strokeWidth="2" />
      <path d="M2 31h28" stroke={TEAL} strokeWidth="2" />
      <circle cx="11" cy="19" r="6" fill="none" stroke="#3ab0a0" strokeWidth="2" strokeDasharray="3 1" />
      <path d="M25 3L15 22" stroke={NAVY} strokeWidth="5" />
      <path d="M25 4l-8 16" stroke="#f6ec90" strokeWidth="2" />
      <path d="M15 19l-1 6 4-4z" fill={NAVY} />
    </>
  ),
  macro: (
    <>
      <path d="M1 6v26l35-13z" fill="#8fd0c0" />
      <circle cx="17" cy="13" r="11" fill="none" stroke="#222" strokeWidth="4" strokeDasharray="5 4" />
      <circle cx="17" cy="13" r="9.5" fill="#b4b4b4" stroke="#333" strokeWidth="1.5" />
      <circle cx="17" cy="13" r="4" fill="#cfcfe6" stroke="#333" strokeWidth="2" />
    </>
  ),
};

function Glyph({ name }: { name: string }) {
  return (
    <svg viewBox="0 0 32 32" className="size-8 shrink-0 overflow-visible drop-shadow-[4px_3px_0_rgba(140,140,150,0.22)]" aria-hidden="true">
      {icons[name]}
    </svg>
  );
}

type ToolProps = { icon: string; label: string; menu?: boolean; menuLight?: boolean };

function Tool({ icon, label, menu, menuLight }: ToolProps) {
  return (
    <button
      type="button"
      aria-label={label}
      className={`relative mt-2 flex h-[38px] shrink-0 items-start ${menu ? 'w-[45px]' : 'w-[42px]'}`}
    >
      <Glyph name={icon} />
      {menu && (
        <span className={`absolute bottom-0 left-7 flex h-2 w-3 items-center justify-center ${menuLight ? 'bg-white' : ''}`}>
          <svg viewBox="0 0 10 6" className="h-[6px] w-[10px]" aria-hidden="true">
            <path d="M0 0h10L5 6z" />
          </svg>
        </span>
      )}
    </button>
  );
}

function Handle() {
  return (
    <span className="mr-[15px] h-[26px] w-1 shrink-0 border-r-2 border-b-2 border-[#a6a6ae] bg-white" />
  );
}

function Divider() {
  return <span className="mr-[10px] h-[51px] w-[2px] shrink-0 border-r border-white bg-[#a6a6ae]" />;
}

function Group({ className = '', children }: { className?: string; children: ReactNode }) {
  return (
    <div role="group" className={`flex shrink-0 items-start ${className}`}>
      <Handle />
      {children}
    </div>
  );
}

function AppLogo({ className }: { className: string }) {
  return (
    <svg viewBox="0 0 24 24" preserveAspectRatio="none" className={className} aria-hidden="true">
      <path d="M0 0h24v24H0z" fill="#050505" />
      <path d="M10 2l4 3 2-5 2 5h6v10l-4 3-2-4-3 1z" fill="#9c4a10" />
      <circle cx="18" cy="8" r="4" fill="#f7b355" />
      <circle cx="18" cy="8" r="2" fill="#fff3cc" />
      <path d="M0 1c6 1 13 10 14 23H8C8 16 5 9 0 6z" fill="#2c8cd6" />
      <path d="M0 6c5 3 8 10 8 18H0z" fill="#0a1a30" />
    </svg>
  );
}

function TitleBar() {
  return (
    <header className="relative flex h-[35px] shrink-0 items-center bg-white">
      <div className="absolute top-0 left-[779px] flex h-[2px] w-[362px] bg-[#d6d6d6]">
        <span className="w-[72px] bg-[#0a6fd6]" />
      </div>
      <AppLogo className="ml-1 h-[20px] w-[21px]" />
      <h1 className="ml-[6px] text-[17px]">CATIA V5 - [CFL BULB (THICKEN).CATPart]</h1>
      <div className="ml-auto flex h-full">
        <button type="button" aria-label="Minimize" className="flex w-[70px] items-center justify-center">
          <svg viewBox="0 0 16 16" className="size-4" aria-hidden="true"><path d="M1 7.500h15" stroke="#000" /></svg>
        </button>
        <button type="button" aria-label="Restore" className="flex w-[70px] items-center justify-center">
          <svg viewBox="0 0 16 16" className="size-4" fill="none" stroke="#000" aria-hidden="true">
            <path d="M1.500 4.500h10v11h-10zM4.500 4.500v-3h10v11h-3" />
          </svg>
        </button>
        <button type="button" aria-label="Close" className="flex w-[72px] items-center justify-center">
          <svg viewBox="0 0 16 16" className="size-4" stroke="#000" aria-hidden="true"><path d="M1 1l14 14M15 1L1 15" /></svg>
        </button>
      </div>
    </header>
  );
}

const menus = ['File', 'Edit', 'View', 'Insert', 'Tools', 'Window', 'Help'];

function MenuBar() {
  return (
    <nav className="flex h-7 shrink-0 items-stretch text-[17px]" aria-label="Main menu">
      <AppLogo className="mt-[2px] ml-[2px] h-[25px] w-[29px]" />
      <button type="button" className="w-[72px] bg-[#ffe4b8] pl-[10px] text-left">
        <span className="underline underline-offset-2">S</span>tart
      </button>
      <button type="button" className="w-[143px] pl-[10px] text-left whitespace-nowrap">ENOVIA V5 VPM</button>
      {menus.map((m) => (
        <button key={m} type="button" className="px-[18px]">
          <span className="underline underline-offset-2">{m[0]}</span>
          {m.slice(1)}
        </button>
      ))}
      <div className="ml-auto flex gap-[3px] bg-[#e6e6ee] px-[2px] pt-[2px] pb-px">
        <button type="button" aria-label="Minimize document" className="flex w-[26px] items-end justify-center bg-white pb-[7px]">
          <span className="h-[3px] w-[9px] bg-[#7d8a9a]" />
        </button>
        <button type="button" aria-label="Restore document" className="flex w-[26px] items-center justify-center bg-white">
          <svg viewBox="0 0 12 12" className="size-3" fill="none" stroke="#7d8a9a" aria-hidden="true">
            <path d="M4 3V1h7v5H9M4 2h7M1 5h7v6H1zM1 6h7" strokeWidth="1.5" />
          </svg>
        </button>
        <button type="button" aria-label="Close document" className="flex w-[26px] items-center justify-center bg-white">
          <svg viewBox="0 0 12 12" className="size-3" stroke="#7d8a9a" strokeWidth="3" aria-hidden="true"><path d="M2 1l8 10M10 1L2 11" /></svg>
        </button>
      </div>
    </nav>
  );
}

function TopToolbars() {
  return (
    <div className="shrink-0 overflow-hidden border-b-2 border-[#6c6c70] bg-[linear-gradient(to_bottom,#fff_0px,#fff_4px,#cfcfe6_14px,#cfcfe6_99px,#b4b4c8_107px,#9c9cb0_117px)]">
      <div className="flex h-[61px] items-start pt-[6px] pl-5">
        <Group>
          <Tool icon="update" label="Update All" />
          <Tool icon="hand" label="Manual Update Mode" />
          <Tool icon="axis" label="Axis System" />
          <Tool icon="digits" label="Mean Dimensions" />
          <Tool icon="block" label="Create Datum" menu />
          <Tool icon="bolt" label="Instantiate From Document" />
          <Tool icon="stack" label="Power Copy" menu />
          <Tool icon="book" label="Catalog" />
          <div className="relative mt-[9px] -ml-[2px] h-8 w-[243px] border-2 border-t-[#7c7c84] border-r-white border-b-white border-l-[#7c7c84] bg-white">
            <select aria-label="Current body" className="h-full w-full appearance-none pl-1 text-[15px] outline-none">
              <option>PartBody</option>
            </select>
            <span className="pointer-events-none absolute top-0 right-0 flex h-full w-[25px] items-center justify-center border-2 border-t-[#e8e8f0] border-r-[#77777f] border-b-[#77777f] border-l-[#e8e8f0] bg-[#d8d8de]">
              <svg viewBox="0 0 10 6" className="h-[6px] w-[10px]" aria-hidden="true"><path d="M0 0h10L5 6z" /></svg>
            </span>
          </div>
        </Group>
        <Group className="ml-[18px]">
          <Tool icon="fillet" label="Edge Fillet" menu />
          <Tool icon="chamfer" label="Chamfer" />
          <Tool icon="draft" label="Draft Angle" menu />
          <Tool icon="shell" label="Shell" />
          <Tool icon="thickness" label="Thickness" />
          <Tool icon="target" label="Thread/Tap" />
          <Tool icon="removeFace" label="Remove Face" menu />
        </Group>
        <Group className="ml-[11px]">
          <Tool icon="pad" label="Pad" menu />
          <Tool icon="pocket" label="Pocket" menu />
          <Tool icon="shaft" label="Shaft" />
          <Tool icon="groove" label="Groove" />
          <Tool icon="hole" label="Hole" />
          <Tool icon="rib" label="Rib" />
          <Tool icon="slot" label="Slot" />
          <Tool icon="stiffener" label="Stiffener" menu />
          <Tool icon="solidCombine" label="Multi-sections Solid" />
          <Tool icon="removedLoft" label="Removed Multi-sections Solid" />
        </Group>
        <Group className="ml-[34px]">
          <Tool icon="dimsOff" label="Constraints Defined in Dialog" />
          <Tool icon="dims" label="Constraint" />
        </Group>
        <Group className="ml-[56px]">
          <Tool icon="cursor" label="Select" menu />
        </Group>
        <Group className="ml-[9px]">
          <Tool icon="transform" label="Translation" menu />
          <Divider />
          <Tool icon="mirror" label="Mirror" />
          <Tool icon="pattern" label="Rectangular Pattern" menu />
          <Divider />
          <Tool icon="scaling" label="Scaling" menu />
        </Group>
      </div>
      <div className="flex h-[54px] items-start pt-[6px] pl-[15px]">
        <Group>
          <Tool icon="formula" label="Formula" />
          <Tool icon="comment" label="Comment and URLs" />
          <button type="button" aria-label="Knowledge Inspector" className="mt-2 flex h-[38px] w-[34px] shrink-0 items-start">
            <svg viewBox="3 0 22 32" className="h-8 w-[22px]" aria-hidden="true">{icons.link}</svg>
          </button>
          <Tool icon="table" label="Design Table" menu />
          <Tool icon="relations" label="Law" />
          <Tool icon="lock" label="Lock Selected Parameters" menu />
          <Tool icon="equivalent" label="Equivalent Dimensions" />
        </Group>
        <Group className="ml-[9px]">
          <Tool icon="point" label="Point" />
          <Tool icon="line" label="Line" />
          <Tool icon="plane" label="Plane" />
        </Group>
        <Group className="ml-[9px]">
          <Tool icon="gears" label="Body" menu />
          <Tool icon="shapeSet" label="Geometrical Set" menu />
          <Tool icon="publish" label="Insert in New Body" />
        </Group>
        <Group className="ml-[47px]">
          <Tool icon="split" label="Split" />
          <Tool icon="thickSurface" label="Thick Surface" />
          <Tool icon="closeSurface" label="Close Surface" />
          <Tool icon="sew" label="Sew Surface" />
        </Group>
        <Group className="ml-[9px]">
          <Tool icon="assemble" label="Assemble" />
          <Divider />
          <Tool icon="boolAdd" label="Add" menu />
          <Tool icon="boolTrim" label="Union Trim" />
          <Divider />
          <Tool icon="lump" label="Remove Lump" />
        </Group>
        <Group className="ml-[12px]">
          <Tool icon="catalog" label="Product Exchange" />
        </Group>
      </div>
    </div>
  );
}

type TreeNode = { label: string; kind: string; expand?: '+' | '-' };

const planes: TreeNode[] = [
  { label: 'xy plane', kind: 'plane' },
  { label: 'yz plane', kind: 'plane' },
  { label: 'zx plane', kind: 'plane' },
  { label: 'Axis Systems', kind: 'axis', expand: '+' },
  { label: 'PartBody', kind: 'body', expand: '-' },
];

const features: TreeNode[] = [
  { label: 'Sketch.1', kind: 'sketch', expand: '+' },
  { label: 'Revolute.1', kind: 'revolute', expand: '+' },
  { label: 'Sketch.2', kind: 'sketch', expand: '+' },
  { label: 'Plane.1', kind: 'plane', expand: '+' },
  { label: 'Sketch.3', kind: 'sketch', expand: '+' },
  { label: 'Sweep.1', kind: 'sweep', expand: '+' },
  { label: 'Symmetry.1', kind: 'symmetry' },
  { label: 'Fill.2', kind: 'fill' },
  { label: 'Fill.3', kind: 'fill' },
  { label: 'Trim.1', kind: 'trim' },
  { label: 'Sketch.4', kind: 'sketch', expand: '+' },
  { label: 'Helix.1', kind: 'helix', expand: '+' },
  { label: 'Helix.3', kind: 'helix', expand: '+' },
  { label: 'Connect.1', kind: 'connect' },
  { label: 'Plane.2', kind: 'plane', expand: '+' },
  { label: 'Sketch.7', kind: 'sketch', expand: '+' },
  { label: 'Line.3', kind: 'line' },
  { label: 'Line.4', kind: 'line' },
  { label: 'Corner.9', kind: 'corner', expand: '+' },
  { label: 'Corner.10', kind: 'corner', expand: '+' },
  { label: 'Corner.7', kind: 'corner', expand: '+' },
];

const treeMarks: Record<string, ReactNode> = {
  plane: (
    <>
      <path d="M3 15l3-3 3 3 3-3 3 3 3-3" stroke="#fff08c" strokeWidth="2" fill="none" />
      <path d="M2 18h14" stroke={NAVY} strokeWidth="2" strokeDasharray="2 2" />
    </>
  ),
  sketch: (
    <>
      <path d="M3 4h6M3 8h5M2 12h4M9 14h3M14 12h5M3 16h3" stroke="#fff" strokeWidth="2" />
      <path d="M20 2L12 12M1 20h20" stroke={NAVY} strokeWidth="2.5" strokeDasharray="3 1" />
      <path d="M6 17l5-2" stroke={TEAL} strokeWidth="2" />
      <path d="M12 10h3" stroke={CREAM} strokeWidth="2" />
    </>
  ),
  revolute: (
    <>
      <path d="M12 4v16" stroke={NAVY} strokeWidth="3" strokeDasharray="3 1" />
      <path d="M13 8l5-6M14 13l6-4" stroke="#30b8d8" strokeWidth="2.5" strokeDasharray="3 1" />
      <path d="M1 12l6 3" stroke="#c81010" strokeWidth="3" />
      <path d="M6 15h4" stroke="#ffe000" strokeWidth="3" />
    </>
  ),
  sweep: (
    <>
      <path d="M5 9l5-6M9 14l9-10M6 6h12" stroke="#104c90" strokeWidth="3" strokeDasharray="3 1" />
      <path d="M8 17l10-8M6 12l8-6M12 18l6-5" stroke="#20b0e8" strokeWidth="3" strokeDasharray="3 1" />
    </>
  ),
  symmetry: (
    <>
      <path d="M5 2v18M16 2v18" stroke={NAVY} strokeWidth="2" strokeDasharray="2 2" />
      <path d="M9 18l4-7 0-8" fill="none" stroke="#fff08c" strokeWidth="3" strokeDasharray="3 1" />
      <path d="M18 4v13" stroke={CYAN} strokeWidth="4" strokeDasharray="3 1" />
    </>
  ),
  fill: (
    <>
      <path d="M3 7c4-7 12-7 16 0M4 13l4-8M10 4l8 8M3 18h16M9 12l3 8" fill="none" stroke="#20c4e8" strokeWidth="3" strokeDasharray="3 1" />
      <path d="M3 14l5-8 5 2 7 5" stroke="#b81818" strokeWidth="2" fill="none" />
      <path d="M10 10l8 0" stroke="#ffe000" strokeWidth="3" strokeDasharray="3 1" />
    </>
  ),
  trim: (
    <>
      <path d="M3 4l6 3M14 4l-3 6" stroke="#fff08c" strokeWidth="3" strokeDasharray="3 1" />
      <path d="M1 14l6-4M12 10l7-7" stroke="#1c3cd8" strokeWidth="3" />
      <path d="M8 15l7 0M8 6l8 5" stroke={CYAN} strokeWidth="3" strokeDasharray="3 1" />
      <path d="M18 8v7" stroke="#fff" strokeWidth="3" />
      <circle cx="18" cy="18" r="3" fill="#111" />
    </>
  ),
  helix: (
    <>
      <path d="M3 17l5-5M8 17l6-7M12 14l6-5" stroke="#1430e0" strokeWidth="2.5" strokeDasharray="3 1" />
      <path d="M4 12l5-3M11 7l7-4" stroke="#38b8f0" strokeWidth="2.5" strokeDasharray="3 1" />
    </>
  ),
  connect: (
    <>
      <path d="M2 10C3 4 7 2 12 2s6 4 7 9" stroke="#e8d840" strokeWidth="2" strokeDasharray="3 3" fill="none" />
      <path d="M11 2l4 2M5 14l4-2" stroke={BLUE} strokeWidth="2" />
      <path d="M14 20l5-9" stroke={CYAN} strokeWidth="2" strokeDasharray="2 2" />
    </>
  ),
  line: (
    <>
      <path d="M8 14L20 2" stroke="#40c0d8" strokeWidth="2" strokeDasharray="3 2" />
      <path d="M2 15l6-3 0 3-4 6M6 14l-3 5" fill="none" stroke="#b81818" strokeWidth="2" />
    </>
  ),
  corner: (
    <>
      <path d="M3 9l6-6" stroke={CREAM} strokeWidth="2" />
      <path d="M2 8v6M8 2h4" stroke={NAVY} strokeWidth="2" />
      <path d="M3 14v6M13 2h7" stroke={TEAL} strokeWidth="2" strokeDasharray="4 1" />
    </>
  ),
};

function TreeIcon({ kind }: { kind: string }) {
  if (kind === 'axis') {
    return (
      <svg viewBox="0 0 22 22" className="size-[22px] shrink-0" fill="none" aria-hidden="true">
        <path d="M8 2v9h9M8 11l-5 6" stroke="#fff08c" strokeWidth="2" />
        <path d="M5 1l3 1M15 8l5 3-5 3" stroke={NAVY} strokeWidth="2" />
      </svg>
    );
  }
  if (kind === 'body') {
    return (
      <svg viewBox="0 0 22 22" className="size-[22px] shrink-0" aria-hidden="true">
        <circle cx="12" cy="11" r="9" fill="#0c3c6c" stroke="#0a1440" strokeWidth="3" strokeDasharray="3 2" />
        <circle cx="9" cy="10" r="7" fill="#2cc8c0" stroke="#48e8d8" strokeWidth="3" strokeDasharray="3 2" />
        <circle cx="8" cy="10" r="3" fill="#0a8a80" stroke="#ffff30" strokeWidth="2" />
        <path d="M3 4l4 3M13 13l3 4M3 17l4-3" stroke="#ffff30" strokeWidth="2" />
      </svg>
    );
  }
  return (
    <svg viewBox="0 0 22 22" className="size-[22px] shrink-0" aria-hidden="true">
      <path d="M0 0h22v22H0z" fill="url(#mesh)" />
      {treeMarks[kind]}
    </svg>
  );
}

function Branch({ expand, width, last }: { expand?: '+' | '-'; width: number; last?: boolean }) {
  return (
    <svg viewBox={`0 0 ${width} 28`} width={width} height="28" className="shrink-0 overflow-visible" aria-hidden="true">
      <path d={`M6 0V${last ? 14 : 28}`} stroke="#fff" strokeWidth="3" />
      <path d={`M6 14H${width - 1}`} stroke="#fff" strokeWidth="2" />
      {expand && (
        <>
          <circle cx="7" cy="13" r="6" fill="url(#knob)" />
          <path d={expand === '+' ? 'M2 13h10M7 8v10' : 'M3 13h8'} stroke="#000" strokeWidth="2" />
        </>
      )}
    </svg>
  );
}

function TreeLabel({ children }: { children: ReactNode }) {
  return <span className="ml-px rounded bg-[#333364] px-[2px] leading-[22px] whitespace-nowrap">{children}</span>;
}

function SpecTree() {
  return (
    <ul className="h-full overflow-hidden pt-[6px] pl-[2px] font-['Noto_Sans',sans-serif] text-[16px] text-[#f2f2fa]">
      <li className="flex h-7 items-center">
        <svg viewBox="0 0 24 26" className="h-[26px] w-6 shrink-0 overflow-visible" aria-hidden="true">
          <path d="M6 15v13" stroke="#fff" strokeWidth="3" />
          <path d="M6 1h10l5 5v11H9z" fill="#fff" stroke={TEAL} />
          <circle cx="10" cy="14" r="6" fill="#26264a" />
          <circle cx="5" cy="14" r="4" fill="#f6dc74" stroke="#fff0a0" strokeWidth="3" strokeDasharray="2 2" />
          <circle cx="5" cy="14" r="2" fill="#7c6410" />
        </svg>
        <span>CFL bulb</span>
      </li>
      {planes.map((n) => (
        <li key={n.label} className="flex h-7 items-center">
          <Branch width={18} expand={n.expand} last={n.label === 'PartBody'} />
          <TreeIcon kind={n.kind} />
          <TreeLabel>{n.label}</TreeLabel>
        </li>
      ))}
      {features.map((n) => (
        <li key={n.label} className="flex h-7 items-center pl-[19px]">
          <Branch width={20} expand={n.expand} />
          <TreeIcon kind={n.kind} />
          <TreeLabel>{n.label}</TreeLabel>
        </li>
      ))}
    </ul>
  );
}

const tubes = {
  backTop: 'M250 215C265 150 400 108 487 92L530 64L630 64L662 88L600 185L575 190L400 236L340 240Z',
  backMid: 'M240 410C270 375 310 352 355 346L560 300L600 286L770 238L900 230L928 255C915 300 880 322 800 345L575 408L395 453L300 470Z',
  backLow: 'M250 620C280 585 320 573 360 566L560 515L600 503L770 457L900 450L920 490C905 535 870 548 800 563L575 627L355 690L300 700Z',
  top: 'M485 108C487 80 505 66 530 66C640 84 770 115 870 160C915 185 930 215 928 245C918 285 892 293 870 293C845 294 832 280 820 265C770 238 700 213 660 206L580 188L520 170C495 158 485 140 485 108Z',
  mid: 'M230 240C228 205 250 180 288 180C318 180 335 195 345 215L395 238L580 290L730 328L815 352L875 380C915 403 930 432 928 462C918 505 890 515 870 515C848 515 838 508 825 492L770 457L580 408L490 383L355 347C270 320 232 282 230 240Z',
  low: 'M230 460C230 425 250 398 290 398C318 400 335 418 347 436L395 455L500 482L580 503L740 545L810 566L885 598C903 620 905 655 888 680C872 700 850 706 820 698L770 683L580 627L500 605L360 567C270 540 233 505 230 460Z',
};

function BulbModel() {
  return (
    <svg
      viewBox="60 48 1038 1956"
      className="pointer-events-none absolute top-[54px] left-1/2 h-[652px] w-[346px] -translate-x-[186px]"
      role="img"
      aria-label="CFL bulb model"
    >
      <defs>
        <linearGradient id="tTop" gradientUnits="userSpaceOnUse" x1="700" y1="95" x2="670" y2="212">
          <stop offset="0" stopColor="#fff" /><stop offset=".45" stopColor="#fafafa" /><stop offset=".75" stopColor="#b4b4b4" /><stop offset="1" stopColor="#6a6a6a" />
        </linearGradient>
        <linearGradient id="tMid" gradientUnits="userSpaceOnUse" x1="580" y1="290" x2="551" y2="405">
          <stop offset="0" stopColor="#fff" /><stop offset=".5" stopColor="#fff" /><stop offset=".75" stopColor="#b8b8b8" /><stop offset="1" stopColor="#686868" />
        </linearGradient>
        <linearGradient id="tLow" gradientUnits="userSpaceOnUse" x1="580" y1="508" x2="551" y2="622">
          <stop offset="0" stopColor="#fff" /><stop offset=".5" stopColor="#fff" /><stop offset=".75" stopColor="#b4b4b4" /><stop offset="1" stopColor="#686868" />
        </linearGradient>
        <linearGradient id="tBack1" gradientUnits="userSpaceOnUse" x1="390" y1="115" x2="420" y2="235">
          <stop offset="0" stopColor="#fff" /><stop offset=".55" stopColor="#f6f6f6" /><stop offset="1" stopColor="#909090" />
        </linearGradient>
        <linearGradient id="tBack2" gradientUnits="userSpaceOnUse" x1="560" y1="294" x2="590" y2="408">
          <stop offset="0" stopColor="#fff" /><stop offset=".45" stopColor="#f6f6f6" /><stop offset=".75" stopColor="#a8a8a8" /><stop offset="1" stopColor="#6c6c6c" />
        </linearGradient>
        <linearGradient id="tBack3" gradientUnits="userSpaceOnUse" x1="560" y1="514" x2="590" y2="628">
          <stop offset="0" stopColor="#fff" /><stop offset=".45" stopColor="#f6f6f6" /><stop offset=".75" stopColor="#a8a8a8" /><stop offset="1" stopColor="#6c6c6c" />
        </linearGradient>
        <linearGradient id="turn" gradientUnits="userSpaceOnUse" x1="720" y1="0" x2="940" y2="60">
          <stop offset="0" stopColor="#444" stopOpacity="0" /><stop offset="1" stopColor="#444" stopOpacity=".4" />
        </linearGradient>
        <linearGradient id="leg">
          <stop offset="0" stopColor="#d0d0d0" /><stop offset=".25" stopColor="#fff" /><stop offset=".75" stopColor="#fff" /><stop offset="1" stopColor="#bbb" />
        </linearGradient>
        <linearGradient id="legLow">
          <stop offset="0" stopColor="#a8a8a8" /><stop offset=".4" stopColor="#e4e4e4" /><stop offset=".7" stopColor="#e0e0e0" /><stop offset="1" stopColor="#a0a0a0" />
        </linearGradient>
        <linearGradient id="elbow" x2="0" y2="1">
          <stop offset="0" stopColor="#5c5c5c" /><stop offset=".6" stopColor="#c8c8c8" /><stop offset="1" stopColor="#f0f0f0" />
        </linearGradient>
        <linearGradient id="cone">
          <stop offset="0" stopColor="#808080" /><stop offset=".2" stopColor="#9c9c9c" /><stop offset=".37" stopColor="#e2e2e2" /><stop offset=".52" stopColor="#aaa" />
          <stop offset=".66" stopColor="#dedede" /><stop offset=".78" stopColor="#9a9a9a" /><stop offset="1" stopColor="#7c7c7c" />
        </linearGradient>
        <linearGradient id="tan">
          <stop offset="0" stopColor="#a09176" /><stop offset=".15" stopColor="#b09f83" /><stop offset=".3" stopColor="#c2b193" /><stop offset=".5" stopColor="#cfbc9a" />
          <stop offset=".72" stopColor="#c6b697" /><stop offset=".85" stopColor="#ae9e82" /><stop offset="1" stopColor="#9a8c72" />
        </linearGradient>
        <linearGradient id="rim">
          <stop offset="0" stopColor="#cdb896" /><stop offset=".5" stopColor="#ffe6c0" /><stop offset="1" stopColor="#c8b391" />
        </linearGradient>
        <linearGradient id="fade" x2="0" y2="1">
          <stop offset="0" stopColor="#665b50" stopOpacity="0" /><stop offset=".3" stopColor="#665b50" stopOpacity=".1" /><stop offset="1" stopColor="#665b50" stopOpacity=".75" />
        </linearGradient>
        <linearGradient id="rise" x2="0" y2="1">
          <stop offset="0" stopColor="#665b50" stopOpacity=".65" /><stop offset="1" stopColor="#665b50" stopOpacity=".02" />
        </linearGradient>
        <linearGradient id="waist">
          <stop offset="0" stopColor="#86795f" /><stop offset=".18" stopColor="#887b66" /><stop offset=".35" stopColor="#7d7161" /><stop offset=".5" stopColor="#877a67" />
          <stop offset=".72" stopColor="#7c7060" /><stop offset=".85" stopColor="#877a65" /><stop offset="1" stopColor="#7d7158" />
        </linearGradient>
        <linearGradient id="dark">
          <stop offset="0" stopColor="#404040" /><stop offset=".2" stopColor="#454545" /><stop offset=".4" stopColor="#515151" /><stop offset=".7" stopColor="#4e4e4e" /><stop offset="1" stopColor="#3f3f3f" />
        </linearGradient>
      </defs>

      {/* back half of the coil */}
      <path d={tubes.backTop} fill="url(#tBack1)" />
      <path d={tubes.backMid} fill="url(#tBack2)" />
      <path d={tubes.backMid} fill="url(#turn)" />
      <path d={tubes.backLow} fill="url(#tBack3)" />
      <path d={tubes.backLow} fill="url(#turn)" />
      <g fill="none" stroke="#0a0a0a" strokeWidth="4">
        <path d="M278 180C300 150 400 112 487 92M278 180C285 200 320 220 345 225" />
        <path d="M400 236L575 190M515 170V204M520 176L575 190" strokeDasharray="8 6" />
        <path d="M530 66L630 64C645 68 655 76 660 86" />
        <path d="M820 265C824 290 780 312 735 325M350 438C380 412 430 396 490 383" />
        <path d="M830 492C826 520 790 538 750 547M366 655C400 636 450 620 510 607M366 655C352 665 352 680 355 690" />
      </g>

      {/* legs */}
      <path d="M812 690H905C895 650 905 630 893 602C920 640 928 690 928 745V888H812Z" fill="#c9c9c9" />
      <path d="M812 690H908V788H812Z" fill="url(#elbow)" />
      <path d="M812 788H908V888H812Z" fill="url(#legLow)" />
      <path d="M230 788V680C234 620 270 590 305 590C345 592 366 625 366 660L348 692V788Z" fill="url(#leg)" />
      <path d="M230 788H348V888H230Z" fill="url(#legLow)" />
      <g fill="none" stroke="#0a0a0a" strokeWidth="4">
        <path d="M230 888V680C234 620 270 590 305 590C345 592 366 625 366 660L348 692V888M230 788H348" />
        <path d="M810 788H930M888 680C905 695 910 715 910 745V888" />
      </g>

      {/* front half of the coil */}
      <path d={tubes.low} fill="url(#tLow)" />
      <path d={tubes.low} fill="url(#turn)" />
      <path d={tubes.mid} fill="url(#tMid)" />
      <path d={tubes.mid} fill="url(#turn)" />
      <path d={tubes.top} fill="url(#tTop)" />
      <path d={tubes.top} fill="url(#turn)" />
      <g fill="none" stroke="#0a0a0a" strokeWidth="4">
        <path d="M525 66C640 86 770 118 870 162C915 185 930 215 928 245C918 285 892 293 870 293C845 294 832 280 820 265" />
        <path d="M698 98C700 150 690 185 662 208M487 92L485 140" />
        <path d="M232 260C225 205 250 180 288 180C318 180 335 195 345 215M280 185C300 215 340 226 395 240L580 290L730 328L815 352L875 380C915 403 930 432 928 462C918 505 890 515 870 515C848 515 838 508 822 480" />
        <path d="M230 470C230 425 250 398 290 398C318 400 335 418 347 436M230 468C260 500 320 520 390 540C500 572 760 632 888 680M885 598C903 620 905 655 888 680C872 700 850 706 812 698" />
      </g>

      {/* collars */}
      {[0, 581].map((dx) => (
        <g key={dx} transform={`translate(${dx} 0)`} stroke="#0a0a0a" strokeWidth="4">
          <path d="M207 890H371L378 902H200Z" fill="#5b605c" />
          <path d="M200 902H378L404 1037H172Z" fill="url(#cone)" />
          <path d="M230 888H348M170 1037H406" strokeWidth="6" />
        </g>
      ))}

      {/* housing */}
      <path d="M97 1040H1060L1088 1068H70Z" fill="url(#rim)" />
      <path d="M70 1068H1088V1243H70Z" fill="url(#tan)" />
      <path d="M70 1243H1088C1088 1300 1080 1335 1050 1387H107C80 1335 70 1300 70 1243Z" fill="url(#tan)" />
      <path d="M70 1243H1088C1088 1300 1080 1335 1050 1387H107C80 1335 70 1300 70 1243Z" fill="url(#fade)" />
      <path d="M107 1387H1050L967 1532H190Z" fill="url(#waist)" />
      <path d="M190 1532H967C950 1570 943 1600 943 1639H215C215 1600 207 1570 190 1532Z" fill="url(#tan)" />
      <path d="M190 1532H967C950 1570 943 1600 943 1639H215C215 1600 207 1570 190 1532Z" fill="url(#rise)" />
      <path d="M215 1639H943L930 1653H229Z" fill="#6c6250" />
      <path d="M287 1655H871V1757H287Z" fill="url(#tan)" />
      <path d="M287 1757H871L857 1770H300Z" fill="#6c6250" />
      <path d="M363 1772H795V1973H363Z" fill="url(#dark)" />
      <path d="M363 1973H795L780 1990H378Z" fill="#2a2a2a" />
      <g fill="none" stroke="#0a0a0a" strokeWidth="4">
        <path d="M97 1040H1060M70 1068H1088M70 1243H1088M107 1387H1050M190 1532H967M215 1639H943M229 1653H930M287 1757H871M300 1770H857M363 1973H795M378 1990H780" />
        <path d="M808 1040L824 1068V1243C824 1310 816 1350 806 1387L767 1532C757 1570 753 1600 752 1639L746 1653M716 1653V1757L710 1770M685 1770V1973L680 1990M363 1973L378 1990" />
        <circle cx="579" cy="1917" r="16" />
      </g>
    </svg>
  );
}

function Compass() {
  return (
    <svg viewBox="1590 182 150 190" className="pointer-events-none absolute top-0 right-[124px] h-[190px] w-[150px] overflow-visible" role="img" aria-label="Compass">
      <path d="M1688 220C1650 220 1615 252 1614 294H1688Z" fill="#1b3c58" stroke="#d8c4ff" strokeWidth="2" />
      <path d="M1689 200V356" stroke="#d8c4ff" strokeWidth="3" />
      <path d="M1613 294.500H1689M1633 357.500H1728" stroke="#d8c4ff" strokeWidth="2" />
      <circle cx="1690" cy="199" r="5.500" fill="#d8c4ff" />
      <path d="M1683 350h14v14h-14z" fill="#c80000" />
      <g fill="#f0e000" fontFamily="Noto Sans, sans-serif" fontSize="18">
        <text x="1674" y="200">z</text>
        <text x="1599" y="296">x</text>
        <text x="1669" y="296">y</text>
      </g>
    </svg>
  );
}

function AxisMark() {
  return (
    <svg viewBox="1765 820 60 68" className="pointer-events-none absolute right-[39px] bottom-[40px] h-[68px] w-[60px] overflow-visible" role="img" aria-label="View axes">
      <path d="M1806.500 845V881.500H1777" fill="none" stroke="#f4f4fa" strokeWidth="1.5" />
      <g fill="#f4f4fa" fontFamily="Noto Sans, sans-serif" fontSize="18">
        <text x="1808" y="844">z</text>
        <text x="1770" y="883">x</text>
      </g>
    </svg>
  );
}

function Viewport() {
  return (
    <main className="flex min-w-0 flex-1 border-t-2 border-l-3 border-t-[#8c8c84] border-l-[#9a9aa0] bg-[linear-gradient(to_bottom,#333364_0%,#3b3b6b_35%,#434372_55%,#484876_66%,#616189_73%,#8080a0_86%,#acacc2_100%)]">
      <div className="flex w-[25px] shrink-0 flex-col bg-[#7a7aff]/50">
        <button type="button" aria-label="Scroll up" className="flex h-[25px] shrink-0 items-center justify-center border-b border-[#c8c8ff] bg-[#7a7aff]">
          <svg viewBox="0 0 14 13" className="h-[13px] w-[14px]" aria-hidden="true"><path d="M7 0l7 13H0z" /></svg>
        </button>
        <div className="flex-1">
          <div className="h-[68%] border-b border-[#40408a] bg-[#7a7aff]" />
        </div>
        <button type="button" aria-label="Scroll down" className="flex h-[25px] shrink-0 items-center justify-center border-t border-[#b0b0ff] bg-[#7a7aff]">
          <svg viewBox="0 0 14 13" className="h-[13px] w-[14px]" aria-hidden="true"><path d="M7 13l7-13H0z" /></svg>
        </button>
      </div>
      <div className="relative min-w-0 flex-1 overflow-hidden">
        <SpecTree />
        <BulbModel />
        <Compass />
        <AxisMark />
      </div>
    </main>
  );
}

function SideBar() {
  return (
    <aside className="flex w-[56px] shrink-0 flex-col items-start border-l-2 border-white bg-[linear-gradient(to_right,#fff_0px,#cfcfe6_12px,#cfcfe6_38px,#9494a8_56px)] pt-[15px] pl-[6px]">
      <span className="h-1 w-[25px] border-r-2 border-b-2 border-[#a6a6ae] bg-white" />
      <div className="mt-[6px] pl-[5px]">
        <Tool icon="sketcher" label="Sketch" menu />
      </div>
      <span className="mt-[14px] h-1 w-[25px] border-r-2 border-b-2 border-[#a6a6ae] bg-white" />
      <div className="mt-[6px] pl-[4px]">
        <Tool icon="macro" label="Part Design" />
      </div>
    </aside>
  );
}

function BottomToolbar() {
  return (
    <div className="flex h-[57px] shrink-0 items-start border-b-2 border-[#6c6c70] bg-[linear-gradient(to_bottom,#fff_0px,#fff_4px,#cfcfe6_14px,#cfcfe6_40px,#a0a0b4_55px)] pt-[7px] pl-[29px]">
      <Group>
        <Tool icon="sectionMaterial" label="Apply Material Section" />
      </Group>
      <Group className="ml-[45px]">
        <Tool icon="catalogOpen" label="Open Catalog" menu />
        <Tool icon="catalogLoad" label="Load Catalog" menu />
      </Group>
      <Group className="ml-[33px]">
        <Tool icon="newFile" label="New" />
        <Tool icon="openFile" label="Open" />
        <Tool icon="save" label="Save" />
        <Tool icon="print" label="Quick Print" />
        <Tool icon="cut" label="Cut" />
        <Tool icon="copy" label="Copy" />
        <Tool icon="paste" label="Paste" />
        <Tool icon="undo" label="Undo" menu />
        <Tool icon="redo" label="Redo" menu />
        <Tool icon="whatsThis" label="What's This?" />
      </Group>
      <Group className="ml-[68px]">
        <Tool icon="paintMaterial" label="Apply Material" />
      </Group>
      <span className="ml-[10px] h-[3px] w-1 shrink-0 border-r-2 border-b border-[#a6a6ae] bg-white" />
      <Group className="ml-[80px]">
        <Tool icon="measure" label="Measure Between" />
        <Tool icon="measureItem" label="Measure Item" />
        <Tool icon="mass" label="Measure Inertia" />
      </Group>
      <Group className="ml-[18px]">
        <Tool icon="fly" label="Fly Mode" />
        <Tool icon="fitAll" label="Fit All In" />
        <Tool icon="pan" label="Pan" />
        <Tool icon="rotate" label="Rotate" />
        <Tool icon="zoomIn" label="Zoom In" />
        <Tool icon="zoomOut" label="Zoom Out" />
        <Tool icon="normalView" label="Normal View" />
        <Tool icon="multiView" label="Create Multi-View" />
        <Tool icon="isoView" label="Isometric View" menu />
        <Tool icon="shading" label="Shading with Edges" menu menuLight />
        <Tool icon="hideShow" label="Hide/Show" />
        <Tool icon="swapSpace" label="Swap Visible Space" />
      </Group>
      <Group className="ml-[10px]">
        <Tool icon="draftAnalysis" label="Draft Analysis" />
        <Tool icon="curvature" label="Surfacic Curvature Analysis" />
        <Tool icon="threadAnalysis" label="Tap - Thread Analysis" />
        <Tool icon="wallThickness" label="Wall Thickness Analysis" />
      </Group>
      <svg viewBox="0 0 60 48" className="-mt-1 ml-auto h-12 w-[60px] shrink-0 overflow-visible" role="img" aria-label="DS CATIA">
        <path d="M14 1c8-1 13 1 11 5-2 3-5 5-9 8" fill="none" stroke="#d8232a" strokeWidth="3" />
        <g fontFamily="Liberation Sans, sans-serif" fontStyle="italic" fontWeight="bold">
          <text x="0" y="37" fontSize="26" fill="#4b2a86">D</text>
          <text x="17" y="33" fontSize="26" fill="#f5a01a">S</text>
          <text x="9" y="48" fontSize="15" fill="#4b2a86">CATIA</text>
        </g>
      </svg>
      <span className="-mt-[7px] h-[55px] w-[10px] shrink-0 bg-[linear-gradient(to_right,transparent,#9494a8)]" />
    </div>
  );
}

function StatusBar() {
  return (
    <footer className="flex h-[35px] shrink-0 items-center pr-[2px] pl-1 text-[17px]">
      <p>Select an object or a command</p>
      <input
        type="text"
        aria-label="Power input"
        className="ml-auto h-7 w-[449px] border-2 border-t-[#7c7c84] border-r-white border-b-white border-l-[#7c7c84] bg-white px-1 outline-none"
      />
      <button type="button" aria-label="Dialog toggle" className="ml-[2px] flex h-[31px] w-12 items-center justify-center border-2 border-t-white border-r-[#7c7c84] border-b-[#7c7c84] border-l-white">
        <svg viewBox="0 0 26 22" className="h-[22px] w-[26px]" fill="none" stroke={GREY} strokeWidth="2" aria-hidden="true">
          <path d="M4 4h9v9H4z" />
          <path d="M16 14h3v3h-3z" />
          <path d="M24 1v20H2" />
        </svg>
      </button>
      <button type="button" aria-label="Information" className="ml-[3px] flex h-[31px] w-12 items-center justify-center border-2 border-t-white border-r-[#7c7c84] border-b-[#7c7c84] border-l-white">
        <svg viewBox="0 0 24 22" className="h-[22px] w-6" aria-hidden="true">
          <path d="M0 0h24v22H0z" fill="#a8a8b0" />
          <path d="M23 0v21H0" fill="none" stroke="#000" strokeWidth="2" />
          <path d="M12 2c12 0 12 14 4 15l1 4-5-4C0 17 0 2 12 2z" fill="#fff" stroke="#000" strokeWidth="1.5" />
          <path d="M12 4v3M10 9h2v6M9 15h6" fill="none" stroke="#1080f0" strokeWidth="3" />
        </svg>
      </button>
    </footer>
  );
}

export default function App() {
  return (
    <div className="flex h-screen flex-col overflow-hidden bg-[#cfcfe6] font-['Open_Sans',sans-serif] text-[#111]">
      {/* paint servers shared by the tree */}
      <svg className="absolute size-0" aria-hidden="true">
        <defs>
          <pattern id="mesh" width="5" height="5" patternUnits="userSpaceOnUse">
            <path d="M0 0h3v3H0zM3 3h2v2H3z" fill="#c4c4c4" />
          </pattern>
          <radialGradient id="knob" cx=".4" cy=".3">
            <stop offset="0" stopColor="#c8c8c0" />
            <stop offset="1" stopColor="#6c6c68" />
          </radialGradient>
        </defs>
      </svg>
      <TitleBar />
      <MenuBar />
      <TopToolbars />
      <div className="flex min-h-0 flex-1">
        <Viewport />
        <SideBar />
      </div>
      <BottomToolbar />
      <StatusBar />
    </div>
  );
}
